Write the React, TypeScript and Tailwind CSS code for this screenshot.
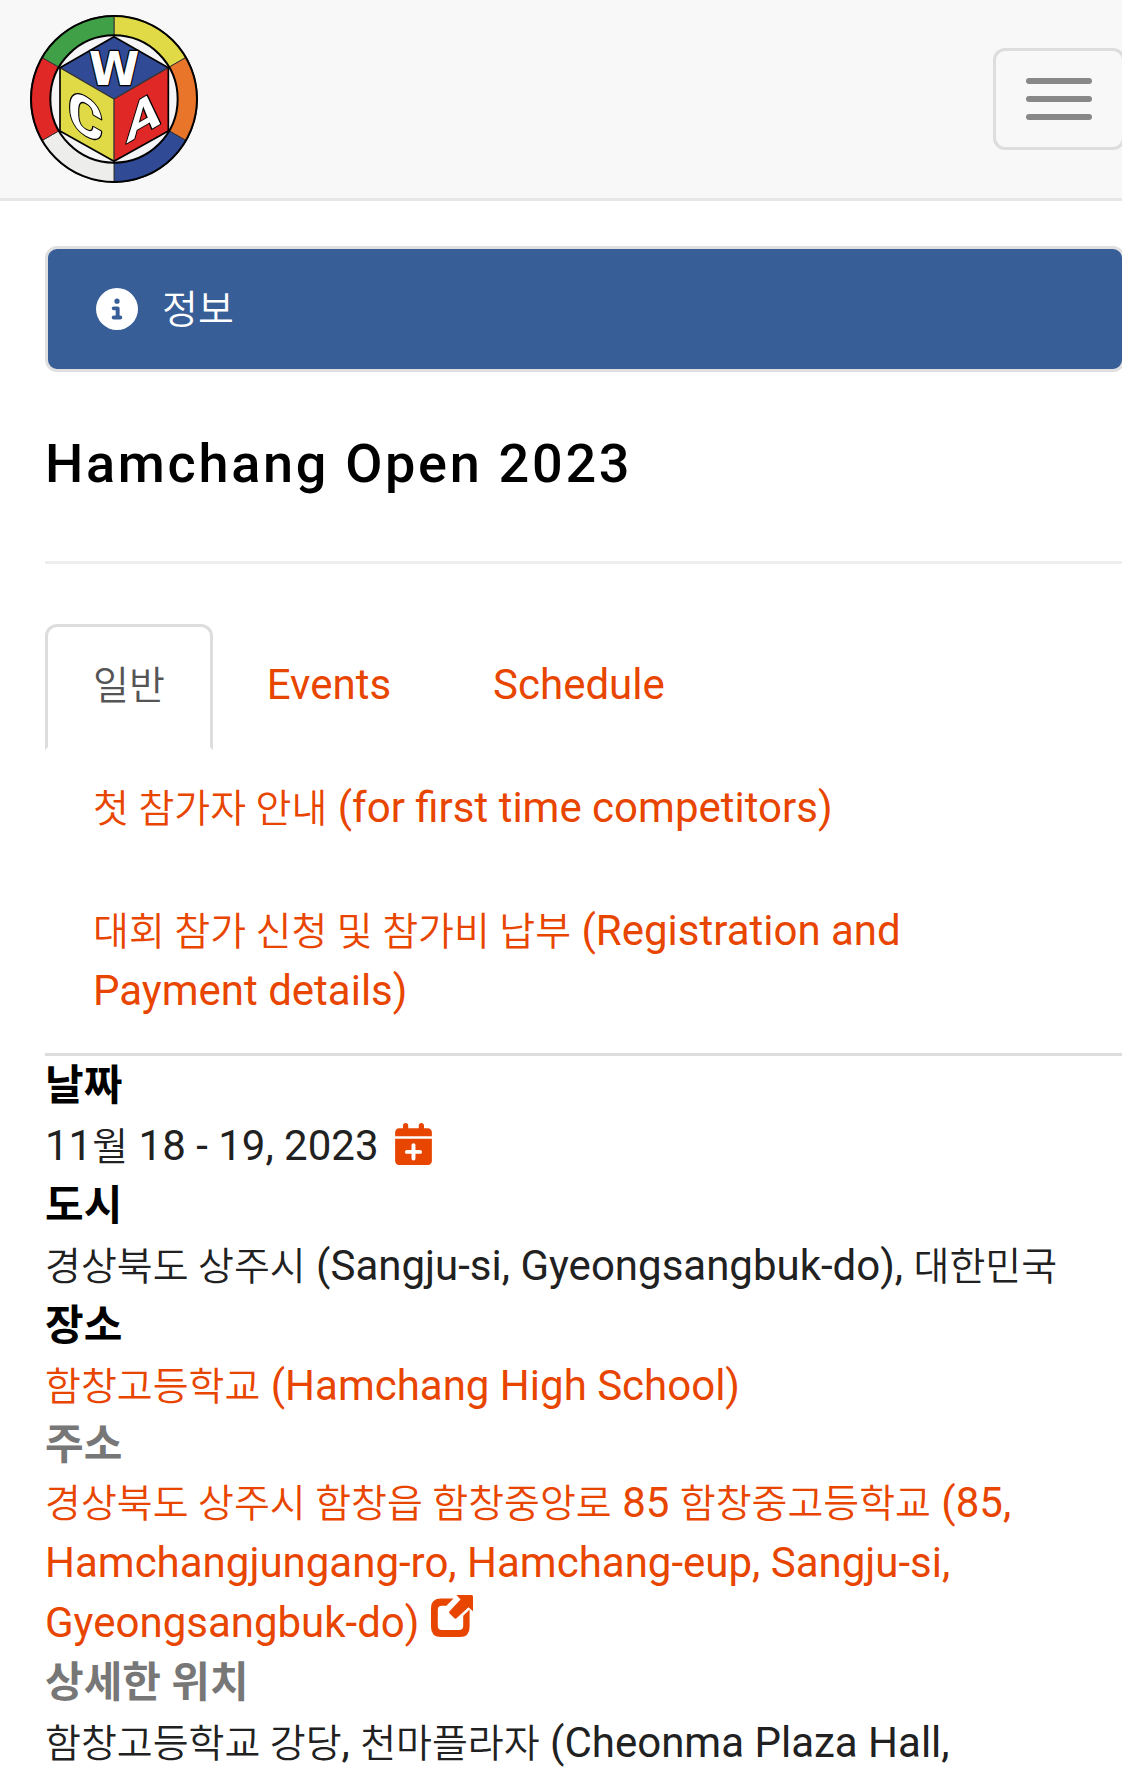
import type { ReactNode } from "react";
import { FaCalendarPlus, FaCircleInfo } from "react-icons/fa6";

/** Hangul runs, set slightly smaller than the Latin text around them. */
function Ko({ children }: { children: string }) {
  return <span className="text-[39px] leading-none font-[350]">{children}</span>;
}

function Logo() {
  return (
    <svg viewBox="90 45 504 504" className="size-42" role="img" aria-label="WCA">
      <g stroke="#333" strokeWidth="3">
        <path d="M342 297V47A250 250 0 0 1 558.5 172Z" fill="#dfda46" />
        <path d="M342 297L558.5 172A250 250 0 0 1 558.5 422Z" fill="#e87529" />
        <path d="M342 297L558.5 422A250 250 0 0 1 342 547Z" fill="#304a96" />
        <path d="M342 297V547A250 250 0 0 1 125.5 422Z" fill="#ededeb" />
        <path d="M342 297L125.5 422A250 250 0 0 1 125.5 172Z" fill="#e02826" />
        <path d="M342 297L125.5 172A250 250 0 0 1 342 47Z" fill="#40a047" />
      </g>
      <circle cx="342" cy="297" r="249" fill="none" stroke="#000" strokeWidth="6" />
      <circle cx="342" cy="297" r="191" fill="#f5f5f7" stroke="#000" strokeWidth="6" />
      <path d="M342 110L505 203L342 297L180 203Z" fill="#304a96" />
      <path d="M180 203L342 297V484L180 393Z" fill="#dfda46" />
      <path d="M505 203V393L342 484V297Z" fill="#e02826" />
      <path d="M180 203L342 297L505 203M342 297V484" fill="none" stroke="#333" strokeWidth="4" />
      <path d="M342 110L505 203V393L342 484L180 393V203Z" fill="none" stroke="#000" strokeWidth="5" />
      <g
        fill="#fff"
        stroke="#000"
        strokeWidth="7"
        strokeLinejoin="round"
        paintOrder="stroke"
        textAnchor="middle"
        className="font-['Roboto',sans-serif] font-bold"
      >
        <text x="342" y="256" fontSize="138" fontFamily="DejaVu Sans">W</text>
        <text transform="translate(256 348) skewY(30)" y="57" fontSize="160">C</text>
        <text transform="translate(430 346) skewY(-30)" y="55" fontSize="152">A</text>
      </g>
    </svg>
  );
}

function NewWindowIcon() {
  return (
    <svg viewBox="0 0 42 42" fill="currentColor" className="ml-3 inline-block size-[42px] align-baseline" aria-hidden="true">
      <path d="M22.5 3.5H10Q0 3.5 0 13V32Q0 42 10 42H29Q38.6 42 38.6 32V14.5L32.2 20.7V31Q32.2 35 28 35H11Q6.8 35 6.8 31V14.5Q6.8 10.7 11 10.7H15.4Z" />
      <path d="M25.4 0H40.5Q42 0 42 1.5V16.3L37.5 12.3L25.5 23.3Q24.3 24.3 23.1 23.1L18.6 18.6Q17.5 17.4 18.6 16.2L29.5 4.6Z" />
    </svg>
  );
}

function Tab({ active = false, children }: { active?: boolean; children: ReactNode }) {
  return (
    <li className="-mb-[3px]">
      <a
        href="#"
        aria-current={active ? "page" : undefined}
        className={
          active
            ? "mr-1.5 block rounded-t-xl border-3 border-[#ddd] border-b-transparent bg-white px-[45px] pt-7 pb-8 text-[#555]"
            : "mr-1.5 block rounded-t-xl border-3 border-transparent px-[45px] pt-7 pb-8 text-[#e84500]"
        }
      >
        {children}
      </a>
    </li>
  );
}

export default function App() {
  return (
    <div className="overflow-hidden bg-white font-['Roboto','Noto_Sans_CJK_KR',sans-serif] text-[42px] leading-[60px] font-normal text-[#212121]">
      <header className="flex items-center justify-between border-b-3 border-[#e7e7e7] bg-[#f8f8f8] py-[15px] pl-[30px]">
        <a href="#">
          <Logo />
        </a>
        <button
          type="button"
          aria-label="메뉴"
          className="-mr-[3px] flex flex-col gap-3 rounded-xl border-3 border-[#ddd] px-[30px] py-[27px]"
        >
          <span className="h-1.5 w-[66px] rounded-full bg-[#888]" />
          <span className="h-1.5 w-[66px] rounded-full bg-[#888]" />
          <span className="h-1.5 w-[66px] rounded-full bg-[#888]" />
        </button>
      </header>

      <main className="-mr-[3px] pl-[45px]">
        <nav className="mt-[45px] rounded-xl border-3 border-[#e0e0e2] bg-[#375e97]">
          <a href="#" className="flex items-center gap-6 px-12 py-[30px] text-white">
            <FaCircleInfo className="size-[42px]" />
            <span>
              <Ko>정보</Ko>
            </span>
          </a>
        </nav>

        <h3 className="mt-[62px] text-[54px] leading-[60px] font-medium tracking-wider text-black">
          Hamchang Open 2023
        </h3>
        <hr className="mt-[67px] border-t-3 border-[#eee]" />

        <ul className="mt-[60px] flex flex-wrap border-b-3 border-[#ddd]">
          <Tab active>
            <Ko>일반</Ko>
          </Tab>
          <Tab>Events</Tab>
          <Tab>Schedule</Tab>
          <Tab>
            <Ko>첫 참가자 안내</Ko> (for first time competitors)
          </Tab>
          <Tab>
            <Ko>대회 참가 신청 및 참가비 납부</Ko> (Registration and Payment details)
          </Tab>
        </ul>

        <dl>
          <dt className="font-bold text-black">날짜</dt>
          <dd>
            11<Ko>월</Ko> 18 - 19, 2023
            <a href="#" aria-label="캘린더에 추가" className="ml-4 inline-block align-baseline text-[#e84500]">
              <FaCalendarPlus className="inline-block h-[42px] w-[37px] align-[-5px]" />
            </a>
          </dd>
          <dt className="font-bold text-black">도시</dt>
          <dd>
            <Ko>경상북도 상주시</Ko> (Sangju-si, Gyeongsangbuk-do), <Ko>대한민국</Ko>
          </dd>
          <dt className="font-bold text-black">장소</dt>
          <dd>
            <a href="#" className="text-[#e84500]">
              <Ko>함창고등학교</Ko> (Hamchang High School)
            </a>
          </dd>
          <dt className="leading-[57px] font-bold text-[#777]">주소</dt>
          <dd>
            <a href="#" className="text-[#e84500]">
              <Ko>경상북도 상주시 함창읍 함창중앙로</Ko> 85 <Ko>함창중고등학교</Ko> (85, Hamchangjungang-ro,
              Hamchang-eup, Sangju-si, Gyeongsangbuk-do)
              <NewWindowIcon />
            </a>
          </dd>
          <dt className="font-bold text-[#777]">상세한 위치</dt>
          <dd>
            <Ko>함창고등학교 강당</Ko>, <Ko>천마플라자</Ko> (Cheonma Plaza Hall,
          </dd>
        </dl>
      </main>
    </div>
  );
}
